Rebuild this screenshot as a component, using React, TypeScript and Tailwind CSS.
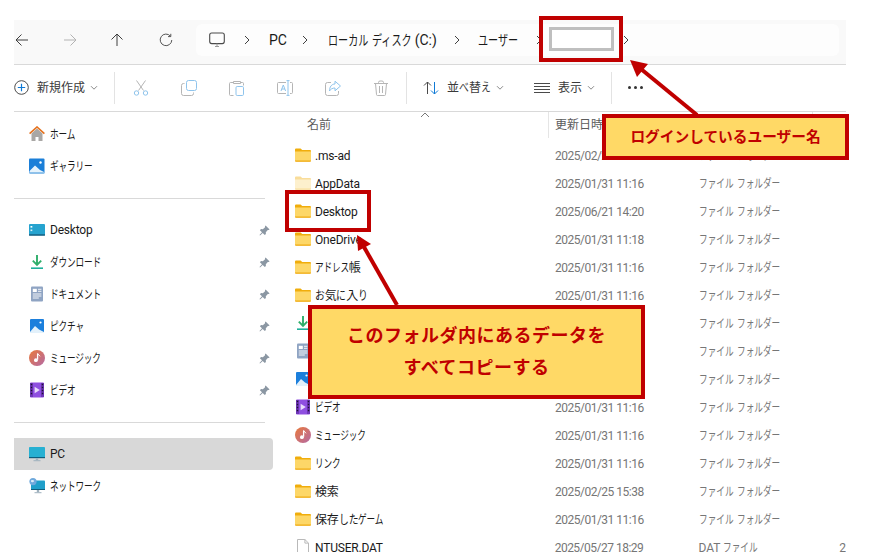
import type { ReactNode } from "react";

// katakana and hiragana in the screenshot's UI font are much narrower than full width
const Label = ({ text }: { text: string }) => (
  <>
    {text.split(/([\u30A0-\u30FF]+|[\u3040-\u309F]+)/).map((run, i) => {
      if (/^[\u30A0-\u30FF]+$/.test(run)) {
        return (
          <span key={i} className="inline-block origin-left scale-x-[0.72]" style={{ marginRight: `${-0.28 * run.length}em` }}>
            {run}
          </span>
        );
      }
      if (/^[\u3040-\u309F]+$/.test(run)) {
        return (
          <span key={i} className="inline-block origin-left scale-x-[0.82]" style={{ marginRight: `${-0.18 * run.length}em` }}>
            {run}
          </span>
        );
      }
      return <span key={i}>{run}</span>;
    })}
  </>
);

const Folder = ({ pale = false }: { pale?: boolean }) => (
  <svg width="16" height="16" viewBox="0 0 16 16" className="shrink-0">
    <path d="M0 2.5A1 1 0 0 1 1 1.5h4.6l1.6 1.6H15a1 1 0 0 1 1 1V5H0z" fill={pale ? "#f9dd9a" : "#f0ad0c"} />
    <path d="M0 4.6h16v9a1 1 0 0 1-1 1H1a1 1 0 0 1-1-1z" fill={pale ? "#fdf0cd" : "#fdd768"} />
    <path d="M0 13.4h16v.4a1 1 0 0 1-1 1H1a1 1 0 0 1-1-1z" fill={pale ? "#f9dd9a" : "#efab12"} />
  </svg>
);

const HomeIcon = () => (
  <svg width="16" height="16" viewBox="0 0 16 16" className="shrink-0">
    <path d="M2.5 7.5 8 2.6l5.5 4.9V15h-4v-4h-3v4h-4z" fill="#a9a7a5" />
    <path d="M0.6 7.6 8 1l7.4 6.6" fill="none" stroke="#e5711d" strokeWidth="1.6" />
  </svg>
);

const GalleryIcon = () => (
  <svg width="16" height="16" viewBox="0 0 16 16" className="shrink-0">
    <rect x="0" y="0.5" width="15.5" height="15" rx="1" fill="#1b7fd8" />
    <path d="M0.5 13 6 7.5l5 4.5 4 2v1H0.5z" fill="#e6f3fc" />
    <circle cx="11.5" cy="4.5" r="1.2" fill="#fff" />
    <rect x="1" y="14" width="14.5" height="1.5" fill="#8fc2ea" />
  </svg>
);

const PictureIcon = () => (
  <svg width="16" height="16" viewBox="0 0 16 16" className="shrink-0">
    <rect x="1" y="1" width="14" height="14" rx="1" fill="#1c7fdc" />
    <path d="M1 14 6 8l4 3.5 5 2.5v1H1z" fill="#e3f1fb" />
    <circle cx="11.5" cy="4.5" r="1.1" fill="#fff" />
  </svg>
);

const DesktopIcon = () => (
  <svg width="16" height="16" viewBox="0 0 16 16" className="shrink-0">
    <rect x="0" y="2" width="16" height="11.5" rx="1" fill="#26a3cf" />
    <rect x="0" y="12.4" width="16" height="1.2" fill="#12506f" />
    <rect x="1.5" y="4" width="1.8" height="1.6" fill="#fff" />
    <rect x="1.5" y="7.5" width="1.8" height="1.6" fill="#d8f2fa" />
  </svg>
);

const DownloadIcon = () => (
  <svg width="16" height="16" viewBox="0 0 16 16" className="shrink-0">
    <path d="M8 1v9.5M3.8 6.6 8 10.8l4.2-4.2" fill="none" stroke="#2fae6a" strokeWidth="1.9" />
    <rect x="2" y="13.4" width="12" height="1.6" fill="#1eb09a" />
  </svg>
);

const DocumentIcon = () => (
  <svg width="16" height="16" viewBox="0 0 16 16" className="shrink-0">
    <rect x="2" y="0.5" width="12" height="15" rx="1" fill="#8fa4c3" />
    <rect x="3.8" y="2.8" width="4" height="3.2" fill="#fff" />
    <path d="M9 3.3h3.4M9 5.3h3.4M3.8 8h8.6M3.8 10h8.6M3.8 12h6" stroke="#fff" strokeWidth="0.9" />
  </svg>
);

const MusicIcon = () => (
  <svg width="16" height="16" viewBox="0 0 16 16" className="shrink-0">
    <defs>
      <linearGradient id="music-fill" x1="0" y1="0" x2="1" y2="1">
        <stop offset="0" stopColor="#e9793a" />
        <stop offset="1" stopColor="#b46aa6" />
      </linearGradient>
    </defs>
    <circle cx="8" cy="8" r="8" fill="url(#music-fill)" />
    <path d="M8.6 3.5v6.2" stroke="#fff" strokeWidth="1.3" />
    <path d="M8.6 3.5c.5 1.4 2 1.6 2.4 2.8" stroke="#fff" strokeWidth="1" fill="none" />
    <circle cx="6.9" cy="10.2" r="1.9" fill="#fff" />
  </svg>
);

const VideoIcon = () => (
  <svg width="16" height="16" viewBox="0 0 16 16" className="shrink-0">
    <rect x="1" y="0.5" width="14" height="15" rx="1" fill="#8f4fe0" />
    <path d="M1 1h3v14H1zM12 1h3v14h-3z" fill="#6f36b8" />
    <path d="M1.8 2.5h1.4M1.8 5.5h1.4M1.8 8.5h1.4M1.8 11.5h1.4M12.8 2.5h1.4M12.8 5.5h1.4M12.8 8.5h1.4M12.8 11.5h1.4" stroke="#1f1233" strokeWidth="1.3" />
    <path d="M5.6 4.8 10.8 8l-5.2 3.2z" fill="#e9dcfb" />
  </svg>
);

const PcIcon = () => (
  <svg width="16" height="16" viewBox="0 0 16 16" className="shrink-0">
    <rect x="0" y="1" width="16" height="11" rx="0.8" fill="#27b0d2" />
    <rect x="0" y="11" width="16" height="1.2" fill="#0e5f7e" />
    <rect x="6.8" y="12.2" width="2.4" height="2" fill="#9fb1bd" />
    <rect x="4.5" y="14.2" width="7" height="1" fill="#9fb1bd" />
  </svg>
);

const NetworkIcon = () => (
  <svg width="16" height="16" viewBox="0 0 16 16" className="shrink-0">
    <rect x="2" y="2.5" width="14" height="9.5" rx="0.8" fill="#1f9fca" />
    <rect x="2" y="11" width="14" height="1" fill="#0e5f7e" />
    <rect x="7.8" y="12" width="2.4" height="2.2" fill="#9fb1bd" />
    <rect x="5.5" y="14.2" width="7" height="1" fill="#9fb1bd" />
    <circle cx="4" cy="3.6" r="3.6" fill="#6fa9dc" />
    <path d="M2 2.5c1.2-.8 2.6-.6 3.2.4-.6 1.4-2.4 1.6-3.2.8z" fill="#dcebf7" />
  </svg>
);

const FileIcon = () => (
  <svg width="16" height="16" viewBox="0 0 16 16" className="shrink-0">
    <path d="M2.5 0.5h7.4l3.6 3.6v11.4h-11z" fill="#fff" stroke="#b9b9b9" />
    <path d="M9.9 0.5v3.6h3.6" fill="none" stroke="#b9b9b9" />
  </svg>
);

const PinIcon = () => (
  <svg width="11" height="11" viewBox="0 0 11 11">
    <path d="M6.6 0.4 10.6 4.4 9.6 5 8.8 4.9 6.8 7.2 6.9 9 5.8 10 3.7 7.9 1 10.4 0.5 10 3 7.2 0.9 5.2 2 4.1 3.8 4.2 6.1 2.2 6 1.3z" fill="#8b97a3" />
  </svg>
);

const Chevron = () => (
  <svg width="8" height="10" viewBox="0 0 8 10">
    <path d="M2 1 6 5 2 9" fill="none" stroke="#404040" strokeWidth="1" />
  </svg>
);

const SmallCaret = () => (
  <svg width="8" height="6" viewBox="0 0 8 6">
    <path d="M1 1.2 4 4.2 7 1.2" fill="none" stroke="#8a8a8a" strokeWidth="1" />
  </svg>
);

const NavArrow = ({ d, color = "#3f3f3f" }: { d: string; color?: string }) => (
  <svg width="14" height="14" viewBox="0 0 14 14">
    <path d={d} fill="none" stroke={color} strokeWidth="1" />
  </svg>
);

const Tool = ({ children }: { children: ReactNode }) => (
  <svg width="16" height="16" viewBox="0 0 16 16" fill="none" strokeWidth="1">
    {children}
  </svg>
);

const toolIcons = [
  <Tool key="cut">
    <path d="M3.5 0.5 10.5 10.5M12.5 0.5 5.5 10.5" stroke="#b5b5b5" />
    <circle cx="3.5" cy="13" r="2.2" stroke="#8fc4ec" />
    <circle cx="12.5" cy="13" r="2.2" stroke="#8fc4ec" />
  </Tool>,
  <Tool key="copy">
    <rect x="5.5" y="0.5" width="10" height="10" rx="2" stroke="#8fc4ec" />
    <path d="M3.5 3.5h-1a2 2 0 0 0-2 2v8a2 2 0 0 0 2 2h8a2 2 0 0 0 2-2v-1" stroke="#b5b5b5" />
  </Tool>,
  <Tool key="paste">
    <path d="M4.5 2.5h-3a1 1 0 0 0-1 1v11a1 1 0 0 0 1 1h3M11.5 2.5h2a1 1 0 0 1 1 1v2M4.5 1.5h7v2h-7z" stroke="#b5b5b5" />
    <rect x="7" y="6.5" width="7.5" height="9" rx="1.2" stroke="#8fc4ec" />
  </Tool>,
  <Tool key="rename">
    <path d="M9 2.5H1.5a1 1 0 0 0-1 1v9a1 1 0 0 0 1 1H9M13 2.5h1.5a1 1 0 0 1 1 1v9a1 1 0 0 1-1 1H13" stroke="#b5b5b5" />
    <path d="M4 11 6.3 5 8.6 11M4.8 9h3M11 1v14M9.5 .6h3M9.5 15.4h3" stroke="#8fc4ec" />
  </Tool>,
  <Tool key="share">
    <path d="M6 2.5H2.5a2 2 0 0 0-2 2v9a2 2 0 0 0 2 2h9a2 2 0 0 0 2-2V11" stroke="#b5b5b5" />
    <path d="M10 1.2 15.5 6 10 10.8V8C7.5 8 5.5 9 4.5 11c0-4 2-7 5.5-7z" stroke="#8fc4ec" />
  </Tool>,
  <Tool key="delete">
    <path d="M1 3.5h14M5.5 3.5v-1a1.5 1.5 0 0 1 1.5-1.5h2a1.5 1.5 0 0 1 1.5 1.5v1M2.5 3.5l1 11a1 1 0 0 0 1 1h7a1 1 0 0 0 1-1l1-11M6.5 6v7M9.5 6v7" stroke="#b5b5b5" />
  </Tool>,
];

type NavItem = { icon: ReactNode; label: string; pin?: boolean; active?: boolean; latin?: boolean };

const navTop: NavItem[] = [
  { icon: <HomeIcon />, label: "ホーム" },
  { icon: <GalleryIcon />, label: "ギャラリー" },
];
const navPinned: NavItem[] = [
  { icon: <DesktopIcon />, label: "Desktop", pin: true, latin: true },
  { icon: <DownloadIcon />, label: "ダウンロード", pin: true },
  { icon: <DocumentIcon />, label: "ドキュメント", pin: true },
  { icon: <PictureIcon />, label: "ピクチャ", pin: true },
  { icon: <MusicIcon />, label: "ミュージック", pin: true },
  { icon: <VideoIcon />, label: "ビデオ", pin: true },
];
const navBottom: NavItem[] = [
  { icon: <PcIcon />, label: "PC", active: true, latin: true },
  { icon: <NetworkIcon />, label: "ネットワーク" },
];

const files: { icon: ReactNode; name: string; date: string; type: string; size?: string }[] = [
  { icon: <Folder />, name: ".ms-ad", date: "2025/02/25 15:38", type: "ファイル フォルダー" },
  { icon: <Folder pale />, name: "AppData", date: "2025/01/31 11:16", type: "ファイル フォルダー" },
  { icon: <Folder />, name: "Desktop", date: "2025/06/21 14:20", type: "ファイル フォルダー" },
  { icon: <Folder />, name: "OneDrive", date: "2025/01/31 11:18", type: "ファイル フォルダー" },
  { icon: <Folder />, name: "アドレス帳", date: "2025/01/31 11:16", type: "ファイル フォルダー" },
  { icon: <Folder />, name: "お気に入り", date: "2025/01/31 11:16", type: "ファイル フォルダー" },
  { icon: <DownloadIcon />, name: "ダウンロード", date: "2025/01/31 11:16", type: "ファイル フォルダー" },
  { icon: <DocumentIcon />, name: "ドキュメント", date: "2025/01/31 11:16", type: "ファイル フォルダー" },
  { icon: <PictureIcon />, name: "ピクチャ", date: "2025/01/31 11:16", type: "ファイル フォルダー" },
  { icon: <VideoIcon />, name: "ビデオ", date: "2025/01/31 11:16", type: "ファイル フォルダー" },
  { icon: <MusicIcon />, name: "ミュージック", date: "2025/01/31 11:16", type: "ファイル フォルダー" },
  { icon: <Folder />, name: "リンク", date: "2025/01/31 11:16", type: "ファイル フォルダー" },
  { icon: <Folder />, name: "検索", date: "2025/02/25 15:38", type: "ファイル フォルダー" },
  { icon: <Folder />, name: "保存したゲーム", date: "2025/01/31 11:16", type: "ファイル フォルダー" },
  { icon: <FileIcon />, name: "NTUSER.DAT", date: "2025/05/27 18:29", type: "DAT ファイル", size: "2" },
];

const NavRow = ({ item }: { item: NavItem }) => (
  <div className={`flex h-8 items-center rounded-r pl-[15px] pr-[3px] ${item.active ? "bg-[#d8d8d8]" : ""}`}>
    {item.icon}
    <span className={`ml-[5px] flex-1 text-[12px] tracking-[-0.2px] text-[#1a1a1a] ${item.latin ? "" : "translate-y-px"}`}>
      <Label text={item.label} />
    </span>
    {item.pin && <PinIcon />}
  </div>
);

const NavDivider = () => (
  <div className="flex h-8 items-center">
    <div className="h-px w-[251px] bg-[#d9d9d9]" />
  </div>
);

const Crumb = ({ label, className }: { label: string; className: string }) => (
  <span className={`whitespace-nowrap text-[14px] text-[#1a1a1a] ${className}`}>
    <Label text={label} />
  </span>
);

const Divider = ({ className }: { className: string }) => (
  <div className={`h-8 w-px bg-[#e3e3e3] ${className}`} />
);

export default function App() {
  return (
    <div className="relative h-[552px] w-[875px] overflow-hidden bg-white pl-[14px] pt-[20px] font-['Roboto','Noto_Sans_CJK_JP',sans-serif]">
      <div className="w-[832px]">
        {/* address bar */}
        <div className="flex h-[45px] items-start border-b border-[#d9d9d9] bg-[#f9f9f9] pt-1">
          <div className="flex h-8 w-[182px] items-center">
            <span className="flex w-4 justify-center"><NavArrow d="M13 7H1M6.5 1.5 1 7l5.5 5.5" /></span>
            <span className="ml-[32px] flex w-4 justify-center"><NavArrow d="M1 7h12M7.5 1.5 13 7l-5.5 5.5" color="#b3b3b3" /></span>
            <span className="ml-[31px] flex w-4 justify-center"><NavArrow d="M7 13V1M1.5 6.5 7 1l5.5 5.5" /></span>
            <span className="ml-[33px] flex w-4 justify-center"><NavArrow d="M11.5 3.2A5.8 5.8 0 1 0 12.8 7M11.8 .8v2.8H9" color="#555555" /></span>
          </div>
          <div className="flex h-8 w-[643px] items-center rounded-md bg-[#fdfdfd] pl-[13px]">
            <svg width="16" height="16" viewBox="0 0 16 16" fill="none">
              <rect x="0.7" y="1" width="14.6" height="10.6" rx="2" stroke="#4a4a4a" strokeWidth="1.1" />
              <path d="M6 14.5h4M8 11.6v2.9" stroke="#9a9a9a" />
            </svg>
            <span className="ml-[18px] flex"><Chevron /></span>
            <Crumb label="PC" className="ml-[18px] w-[17px]" />
            <span className="ml-[15px] flex"><Chevron /></span>
            <Crumb label="ローカル ディスク (C:)" className="ml-[19px] w-[108px]" />
            <span className="ml-[17px] flex"><Chevron /></span>
            <Crumb label="ユーザー" className="ml-[17px] w-[41px]" />
            <span className="ml-[16px] flex"><Chevron /></span>
            <span className="ml-[79px] flex"><Chevron /></span>
          </div>
        </div>

        {/* command bar */}
        <div className="flex h-[47px] items-center border-b border-[#d9d9d9] pb-px">
          <svg width="15" height="15" viewBox="0 0 15 15" fill="none">
            <circle cx="7.5" cy="7.5" r="6.8" stroke="#4a4a4a" />
            <path d="M7.5 3.8v7.4M3.8 7.5h7.4" stroke="#0f7ad6" strokeWidth="1.2" />
          </svg>
          <span className="ml-2 text-[12px] text-[#3a3a3a]">新規作成</span>
          <span className="ml-[5px] flex"><SmallCaret /></span>
          <Divider className="ml-4" />
          <div className="ml-[18px] flex gap-8">{toolIcons}</div>
          <Divider className="ml-[17px]" />
          <svg className="ml-[16px]" width="16" height="16" viewBox="0 0 16 16" fill="none">
            <path d="M4.5 14V2M1 5.5 4.5 2 8 5.5" stroke="#4a4a4a" />
            <path d="M11.5 2v12M8 10.5l3.5 3.5 3.5-3.5" stroke="#0f7ad6" />
          </svg>
          <span className="ml-2 w-[44px] whitespace-nowrap text-[12px] text-[#3a3a3a]"><Label text="並べ替え" /></span>
          <span className="ml-[5px] flex"><SmallCaret /></span>
          <svg className="ml-[30px]" width="16" height="12" viewBox="0 0 16 12" fill="none">
            <path d="M0 1.5h16M0 4.5h16M0 7.5h16M0 10.5h16" stroke="#4a4a4a" />
          </svg>
          <span className="ml-2 text-[12px] text-[#3a3a3a]">表示</span>
          <span className="ml-[5px] flex"><SmallCaret /></span>
          <Divider className="ml-4" />
          <div className="ml-[16px] flex gap-[3px]">
            <span className="h-[3px] w-[3px] rounded-full bg-[#333333]" />
            <span className="h-[3px] w-[3px] rounded-full bg-[#333333]" />
            <span className="h-[3px] w-[3px] rounded-full bg-[#333333]" />
          </div>
        </div>

        <div className="flex">
          {/* sidebar */}
          <div className="w-[259px] shrink-0 pt-[6px]">
            {navTop.map((item) => <NavRow key={item.label} item={item} />)}
            <NavDivider />
            {navPinned.map((item) => <NavRow key={item.label} item={item} />)}
            <NavDivider />
            {navBottom.map((item) => <NavRow key={item.label} item={item} />)}
          </div>

          {/* file list */}
          <div className="ml-[3px] min-w-0 flex-1 overflow-hidden">
            <div className="relative flex h-[29px] text-[12px] text-[#5c5c5c]">
              <div className="h-[26px] w-[272px] pl-[31px] pt-[4px]">名前</div>
              <div className="h-[26px] w-[264px] border-l border-[#e5e5e5] pl-[6px] pt-[4px]">更新日時</div>
              <div className="h-[26px] flex-1 border-l border-[#e5e5e5]" />
              <svg className="absolute left-[144px] top-0" width="10" height="6" viewBox="0 0 10 6">
                <path d="M1 5 5 1l4 4" fill="none" stroke="#777777" />
              </svg>
            </div>
            {files.map((file) => (
              <div key={file.name} className="flex h-7 items-center whitespace-nowrap text-[12px]">
                <div className="flex w-[279px] items-center pl-[19px] text-[#1a1a1a]">
                  {file.icon}
                  <span className="ml-1 translate-y-px tracking-[-0.2px]"><Label text={file.name} /></span>
                </div>
                <span className="w-[144px] translate-y-px tracking-[-0.5px] text-[#767676]">{file.date}</span>
                <span className="w-[141px] translate-y-px text-[#767676]"><Label text={file.type} /></span>
                <span className="translate-y-px text-[#767676]">{file.size}</span>
              </div>
            ))}
          </div>
        </div>
      </div>

      {/* annotations */}
      <svg className="pointer-events-none absolute inset-0" width="875" height="552" viewBox="0 0 875 552">
        <path d="M697 115 641 69" stroke="#c00000" strokeWidth="4" />
        <path d="M630 60 648 64 637 77z" fill="#c00000" />
        <path d="M397 305 364 247" stroke="#c00000" strokeWidth="4" />
        <path d="M357 235 371 244 358 251z" fill="#c00000" />
      </svg>
      <div className="absolute left-[539px] top-4 flex h-[46px] w-[84px] items-center justify-center border-4 border-[#c00000]">
        <div className="h-6 w-[65px] border-[3px] border-[#bfbfbf] bg-white" />
      </div>
      <div className="absolute left-[285px] top-[190px] h-[42px] w-[86px] border-4 border-[#c00000]" />
      <div className="absolute left-[602px] top-[114px] flex h-[46px] w-[247px] items-center justify-center border-4 border-[#c00000] bg-[#ffd966] text-[14.7px] font-bold text-[#c00000]">
        ログインしているユーザー名
      </div>
      <div className="absolute left-[308px] top-[305px] flex h-[94px] w-[337px] flex-col items-center justify-center border-4 border-[#c00000] bg-[#ffd966] pb-px text-[18px] font-bold leading-8 tracking-[0.5px] text-[#c00000]">
        <span>このフォルダ内にあるデータを</span>
        <span>すべてコピーする</span>
      </div>
    </div>
  );
}
